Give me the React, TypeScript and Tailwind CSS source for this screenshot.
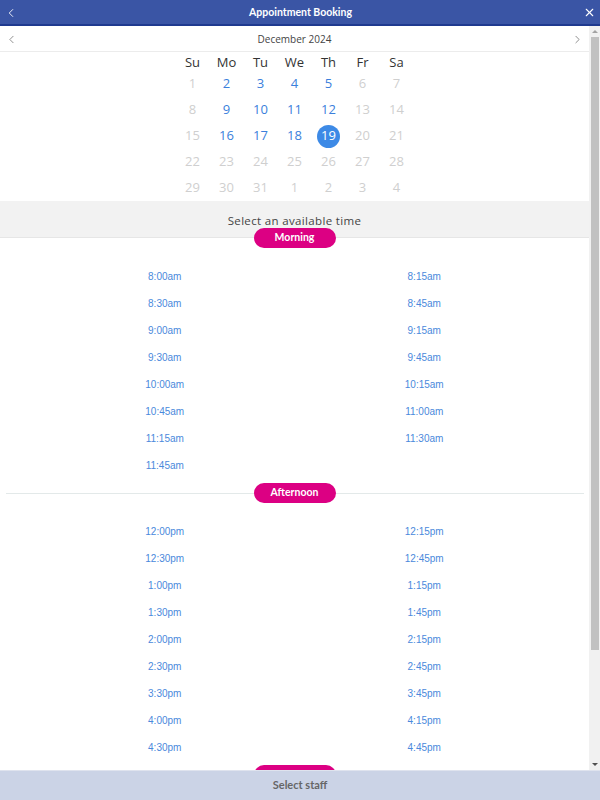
import React from 'react'
import { ChevronLeft, ChevronRight, X } from 'lucide-react'

const days = ['Su', 'Mo', 'Tu', 'We', 'Th', 'Fr', 'Sa']

// December 2024 grid, with leading/trailing days from other months
const weeks: { d: number; on: boolean }[][] = [
  [1, 2, 3, 4, 5, 6, 7],
  [8, 9, 10, 11, 12, 13, 14],
  [15, 16, 17, 18, 19, 20, 21],
  [22, 23, 24, 25, 26, 27, 28],
  [29, 30, 31, 1, 2, 3, 4],
].map((w, wi) =>
  w.map((d, i) => ({
    d,
    on: wi < 3 && i > 0 && i < 5 && d <= 19,
  }))
)

const morning = [
  '8:00am', '8:15am', '8:30am', '8:45am', '9:00am', '9:15am', '9:30am', '9:45am',
  '10:00am', '10:15am', '10:45am', '11:00am', '11:15am', '11:30am', '11:45am',
]

const afternoon = [
  '12:00pm', '12:15pm', '12:30pm', '12:45pm', '1:00pm', '1:15pm', '1:30pm', '1:45pm',
  '2:00pm', '2:15pm', '2:30pm', '2:45pm', '3:30pm', '3:45pm', '4:00pm', '4:15pm',
  '4:30pm', '4:45pm',
]

const lato = { fontFamily: 'Lato, "Open Sans", sans-serif' }

function Pill({ label }: { label?: string }) {
  return (
    <div
      className="flex h-[20px] w-[82px] items-center justify-center rounded-full bg-[#dc0083] text-[10.5px] font-bold text-white"
      style={lato}
    >
      {label}
    </div>
  )
}

function Divider({ label }: { label?: string }) {
  return (
    <div className="relative flex h-[20px] items-center justify-center">
      <div className="absolute left-[6px] right-[5px] top-[10px] h-px bg-[#e3e9e9]" />
      <div className="relative">
        <Pill label={label} />
      </div>
    </div>
  )
}

function Times({ items }: { items: string[] }) {
  return (
    <div className="grid grid-cols-2 px-[35px] pb-[4px] pt-[15px]">
      {items.map((t) => (
        <div
          key={t}
          className="flex h-[27px] items-center justify-center text-[10px] text-[#4a89dc]"
          style={{ fontFamily: '"Liberation Sans", Arial, sans-serif' }}
        >
          {t}
        </div>
      ))}
    </div>
  )
}

function Scrollbar() {
  return (
    <div className="flex w-[11px] flex-col items-center bg-[#f1f1f1]">
      <div className="flex h-[11px] items-center justify-center">
        <div className="h-0 w-0 border-x-[3px] border-b-[3px] border-x-transparent border-b-[#a3a3a3]" />
      </div>
      <div className="h-[613px] w-[8px] bg-[#c1c1c1]" />
      <div className="flex-1" />
      <div className="flex h-[11px] items-center justify-center">
        <div className="h-0 w-0 border-x-[3px] border-t-[3px] border-x-transparent border-t-[#505050]" />
      </div>
    </div>
  )
}

export default function App() {
  return (
    <div
      className="flex h-[800px] w-[600px] flex-col overflow-hidden bg-white"
      style={{ fontFamily: '"Open Sans", "Noto Sans", sans-serif' }}
    >
      {/* top bar */}
      <header className="flex h-[26px] items-center justify-between border-b-2 border-[#1f3a8f] bg-[#3a55a5] px-[4px] pt-[1px] text-white">
        <ChevronLeft size={14} strokeWidth={1.5} />
        <div className="text-[10.5px] font-bold" style={lato}>
          Appointment Booking
        </div>
        <X size={13} strokeWidth={2} />
      </header>

      <div className="flex h-[744px]">
        <main className="flex-1 overflow-hidden">
          {/* month switcher */}
          <div className="flex h-[26px] items-center justify-between border-b border-[#ececec] px-[5px] pt-[1px] text-[#555]">
            <ChevronLeft size={13} strokeWidth={1.2} />
            <div className="text-[10px] text-[#444]">December 2024</div>
            <ChevronRight size={13} strokeWidth={1.2} />
          </div>

          {/* calendar */}
          <div className="mx-auto w-[238px]">
            <div className="grid h-[19px] grid-cols-7">
              {days.map((d) => (
                <div key={d} className="flex items-center justify-center pt-[1px] text-[13px] leading-none text-[#333]">
                  {d}
                </div>
              ))}
            </div>
            {weeks.map((w, wi) => (
              <div key={wi} className="grid h-[26px] grid-cols-7">
                {w.map((c, i) => (
                  <div key={i} className="flex items-center justify-center text-[13px]">
                    {wi === 2 && c.d === 19 ? (
                      <div className="flex h-[23px] w-[23px] items-center justify-center rounded-full bg-[#3d8ae6] text-white">
                        19
                      </div>
                    ) : (
                      <span className={c.on ? 'text-[#3b7fdc]' : 'text-[#cfcfcf]'}>{c.d}</span>
                    )}
                  </div>
                ))}
              </div>
            ))}
          </div>

          {/* time picker */}
          <div className="flex h-[37px] items-center justify-center border-b border-[#e6e6e6] bg-[#f2f2f2] pt-[3px] text-[11.5px] tracking-[0.03em] text-[#444]">
            Select an available time
          </div>
          <div className="-mt-[10px] flex justify-center">
            <Pill label="Morning" />
          </div>
          <Times items={morning} />
          <Divider label="Afternoon" />
          <Times items={afternoon} />
          <Divider />
        </main>
        <Scrollbar />
      </div>

      <footer
        className="flex h-[30px] items-center justify-center border-t border-[#dfe3ee] bg-[#cbd3e6] text-[11px] font-bold text-[#666]"
        style={lato}
      >
        Select staff
      </footer>
    </div>
  )
}
